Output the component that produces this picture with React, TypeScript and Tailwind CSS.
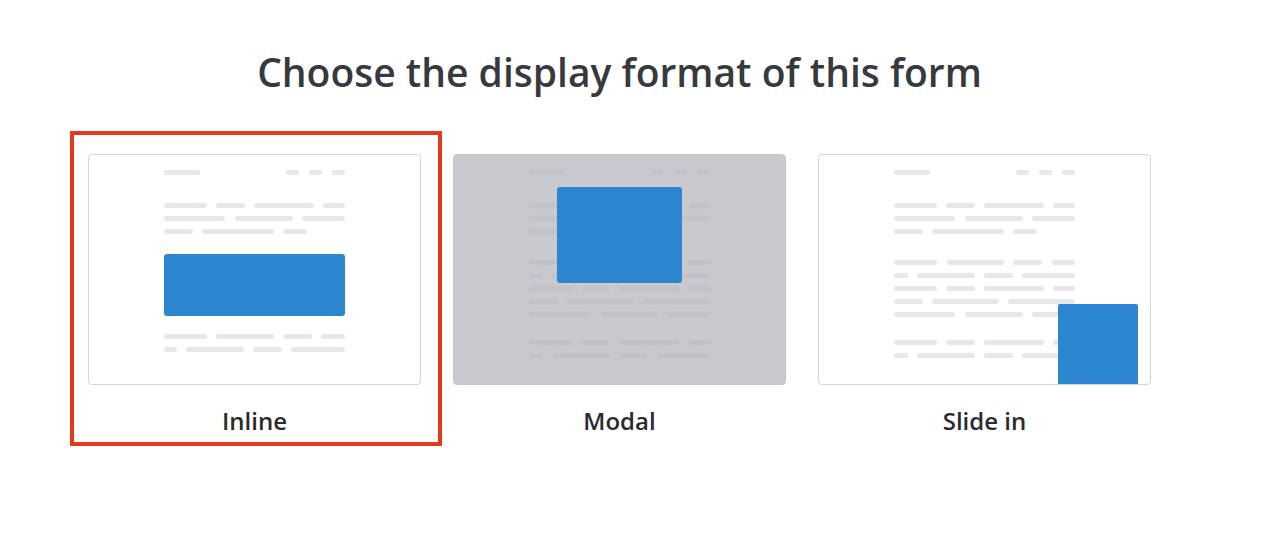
import React from "react";

const font = { fontFamily: '"Open Sans", "Noto Sans", sans-serif' };

// widths of the placeholder text strokes, one array per line
const para1 = [[43, 29, 60, 22], [61, 58, 43], [29, 72, 24]];
const para2 = [[43, 57, 29, 23], [14, 58, 29, 53], [43, 29, 60, 22], [29, 67, 67], [61, 58, 43]];
const para3 = [[43, 29, 60, 22], [14, 58, 29, 53]];
const inlineAfter = [[43, 58, 29, 24], [13, 58, 29, 54]];

function Lines({ rows, tone }: { rows: number[][]; tone: string }) {
  return (
    <div className="flex flex-col gap-[8px]">
      {rows.map((row, i) => {
        const total = row.reduce((a, b) => a + b, 0) + (row.length - 1) * 9;
        const full = total >= 170;
        return (
          <div key={i} className={full ? "flex justify-between" : "flex gap-[9px]"}>
            {row.map((w, j) => (
              <div key={j} className={`h-[5px] rounded-full ${tone}`} style={{ width: w }} />
            ))}
          </div>
        );
      })}
    </div>
  );
}

function Header({ tone }: { tone: string }) {
  return (
    <div className="flex items-center justify-between">
      <div className={`h-[5px] w-[36px] rounded-full ${tone}`} />
      <div className="flex gap-[10px]">
        <div className={`h-[5px] w-[13px] rounded-full ${tone}`} />
        <div className={`h-[5px] w-[13px] rounded-full ${tone}`} />
        <div className={`h-[5px] w-[13px] rounded-full ${tone}`} />
      </div>
    </div>
  );
}

function Article({ tone }: { tone: string }) {
  return (
    <div className="mx-auto flex w-[181px] flex-col pt-[15px]">
      <Header tone={tone} />
      <div className="mt-[28px]">
        <Lines rows={para1} tone={tone} />
      </div>
      <div className="mt-[26px]">
        <Lines rows={para2} tone={tone} />
      </div>
      <div className="mt-[23px]">
        <Lines rows={para3} tone={tone} />
      </div>
    </div>
  );
}

function InlinePreview() {
  const tone = "bg-[#e6e7ea]";
  return (
    <div className="h-[231px] w-[333px] rounded-[4px] border border-[#d5d6da] bg-white">
      <div className="mx-auto flex w-[181px] flex-col pt-[15px]">
        <Header tone={tone} />
        <div className="mt-[28px]">
          <Lines rows={para1} tone={tone} />
        </div>
        <div className="mt-[20px] h-[62px] rounded-[3px] bg-[#2c86cf]" />
        <div className="mt-[18px]">
          <Lines rows={inlineAfter} tone={tone} />
        </div>
      </div>
    </div>
  );
}

function ModalPreview() {
  return (
    <div className="relative h-[231px] w-[333px] overflow-hidden rounded-[4px] border border-[#c4c5ca] bg-[#c9cacf]">
      <div className="opacity-60 blur-[0.8px]">
        <Article tone="bg-[#bbbcc1]" />
      </div>
      <div className="absolute left-[103px] top-[32px] h-[96px] w-[125px] rounded-[3px] bg-[#2c86cf]" />
    </div>
  );
}

function SlidePreview() {
  return (
    <div className="relative h-[231px] w-[333px] overflow-hidden rounded-[4px] border border-[#d5d6da] bg-white">
      <Article tone="bg-[#e6e7ea]" />
      <div className="absolute bottom-0 right-[12px] h-[80px] w-[80px] rounded-t-[2px] bg-[#2c86cf]" />
    </div>
  );
}

function Option({ label, selected, children }: { label: string; selected?: boolean; children: React.ReactNode }) {
  return (
    <div className="relative flex flex-col items-center">
      {selected && (
        <div className="pointer-events-none absolute -bottom-[10px] -left-[18px] -right-[21px] -top-[23px] border-[4px] border-[#e5391c]" />
      )}
      {children}
      <div className="mt-[21px] text-[24px] font-semibold leading-[30px] text-[#2b2b2d]">{label}</div>
    </div>
  );
}

export default function App() {
  return (
    <div className="min-h-[541px] w-full bg-white pr-[34px]" style={font}>
      <h1 className="pt-[48px] text-center text-[39px] font-semibold leading-[47px] text-[#36393d]">
        Choose the display format of this form
      </h1>
      <div className="mt-[59px] flex justify-center gap-[32px]">
        <Option label="Inline" selected>
          <InlinePreview />
        </Option>
        <Option label="Modal">
          <ModalPreview />
        </Option>
        <Option label="Slide in">
          <SlidePreview />
        </Option>
      </div>
    </div>
  );
}
